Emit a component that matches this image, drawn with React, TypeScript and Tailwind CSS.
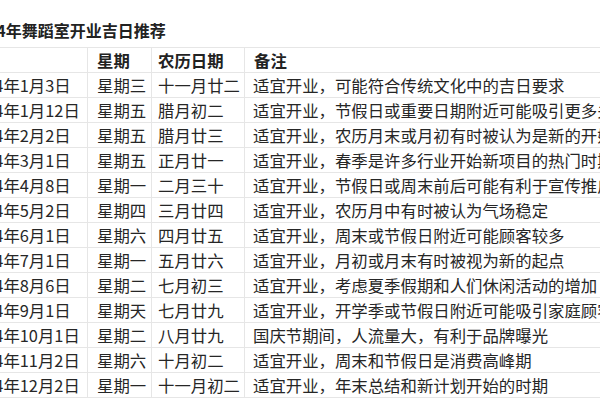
const rows: [string, string, string, string][] = [
  ["2024年1月3日", "星期三", "十一月廿二", "适宜开业，可能符合传统文化中的吉日要求"],
  ["2024年1月12日", "星期五", "腊月初二", "适宜开业，节假日或重要日期附近可能吸引更多关注"],
  ["2024年2月2日", "星期五", "腊月廿三", "适宜开业，农历月末或月初有时被认为是新的开始"],
  ["2024年3月1日", "星期五", "正月廿一", "适宜开业，春季是许多行业开始新项目的热门时期"],
  ["2024年4月8日", "星期一", "二月三十", "适宜开业，节假日或周末前后可能有利于宣传推广"],
  ["2024年5月2日", "星期四", "三月廿四", "适宜开业，农历月中有时被认为气场稳定"],
  ["2024年6月1日", "星期六", "四月廿五", "适宜开业，周末或节假日附近可能顾客较多"],
  ["2024年7月1日", "星期一", "五月廿六", "适宜开业，月初或月末有时被视为新的起点"],
  ["2024年8月6日", "星期二", "七月初三", "适宜开业，考虑夏季假期和人们休闲活动的增加"],
  ["2024年9月1日", "星期天", "七月廿九", "适宜开业，开学季或节假日附近可能吸引家庭顾客"],
  ["2024年10月1日", "星期二", "八月廿九", "国庆节期间，人流量大，有利于品牌曝光"],
  ["2024年11月2日", "星期六", "十月初二", "适宜开业，周末和节假日是消费高峰期"],
  ["2024年12月2日", "星期一", "十一月初二", "适宜开业，年末总结和新计划开始的时期"],
];

const font = { fontFamily: '"Noto Sans CJK SC", "Noto Sans", sans-serif' };

function Cell({ children, pad, head }: { children?: string; pad: string; head?: boolean }) {
  return (
    <div
      className={`h-[25px] border-b border-r border-[#e6e6e6] whitespace-nowrap overflow-hidden text-[16.4px] leading-[24px] ${pad} ${
        head ? "font-bold text-[#222]" : "text-[#262626]"
      }`}
    >
      {children}
    </div>
  );
}

export default function App() {
  return (
    <div className="w-[600px] h-[400px] overflow-hidden bg-white" style={font}>
      <div className="ml-[-41px] w-[760px]">
        <div className="h-[47px] pt-[19px] pl-[9px] text-[16px] leading-[22px] font-bold text-[#222]">
          2024年舞蹈室开业吉日推荐
        </div>
        <div className="grid grid-cols-[129px_64px_93px_1fr] border-t border-[#e6e6e6]">
          <Cell pad="pl-[8px]" head />
          <Cell pad="pl-[9px]" head>星期</Cell>
          <Cell pad="pl-[6px]" head>农历日期</Cell>
          <Cell pad="pl-[9px]" head>备注</Cell>
          {rows.map((r) => (
            <>
              <Cell pad="pl-[8px]">{r[0]}</Cell>
              <Cell pad="pl-[9px]">{r[1]}</Cell>
              <Cell pad="pl-[6px]">{r[2]}</Cell>
              <Cell pad="pl-[8px]">{r[3]}</Cell>
            </>
          ))}
        </div>
      </div>
    </div>
  );
}
